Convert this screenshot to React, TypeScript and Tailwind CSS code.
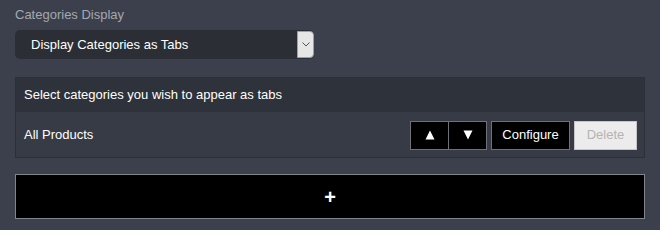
import React from "react";

export default function App() {
  return (
    <div
      className="w-[660px] h-[230px] bg-[#3b404c] px-[15px] pt-[7px] text-[13px] leading-[16px]"
      style={{ fontFamily: '"Liberation Sans", Arial, sans-serif' }}
    >
      <div className="text-[#a4a8b0] h-[16px]">Categories Display</div>
      <div className="mt-[7px] flex w-[299px] h-[29px] rounded-[5px] bg-[#2b2e35] overflow-hidden">
        <div className="flex-1 flex items-center pl-[16px] text-white">Display Categories as Tabs</div>
        <div className="w-[17px] my-[1px] bg-[#e6e6e6] border border-[#a0a0a0] rounded-r-[4px] flex items-center justify-center">
          <svg width="8" height="5" viewBox="0 0 8 5">
            <path d="M0.5 0.5 L4 4 L7.5 0.5" fill="none" stroke="#555" strokeWidth="1" />
          </svg>
        </div>
      </div>

      <div className="mt-[18px] border border-[#2b2f37] bg-[#363b46]">
        <div className="h-[34px] bg-[#2e323a] flex items-center pl-[8px] text-white">
          Select categories you wish to appear as tabs
        </div>
        <div className="h-[45px] flex items-center pl-[8px] pr-[7px] pt-[1px] text-white">
          <div className="flex-1">All Products</div>
          <div className="flex items-center h-[29px]">
            <button className="w-[39px] h-[29px] bg-black border border-[#6d717a] flex items-center justify-center">
              <svg width="10" height="10" viewBox="0 0 10 10">
                <path d="M5 0.5 L9.5 9.5 L0.5 9.5 Z" fill="white" />
              </svg>
            </button>
            <button className="w-[38px] h-[29px] bg-black border border-l-0 border-[#6d717a] flex items-center justify-center">
              <svg width="10" height="10" viewBox="0 0 10 10">
                <path d="M0.5 0.5 L9.5 0.5 L5 9.5 Z" fill="white" />
              </svg>
            </button>
            <button className="ml-[4px] w-[79px] h-[29px] bg-black border border-[#6d717a] text-white">
              Configure
            </button>
            <button className="ml-[4px] w-[63px] h-[29px] bg-[#ececec] border border-[#c6c6c6] text-[#b4b4b4]">
              Delete
            </button>
          </div>
        </div>
      </div>

      <button className="mt-[16px] w-[630px] h-[45px] bg-black border border-[#80848c] text-white flex items-center justify-center">
        <span className="text-[20px] font-bold leading-none">+</span>
      </button>
    </div>
  );
}
